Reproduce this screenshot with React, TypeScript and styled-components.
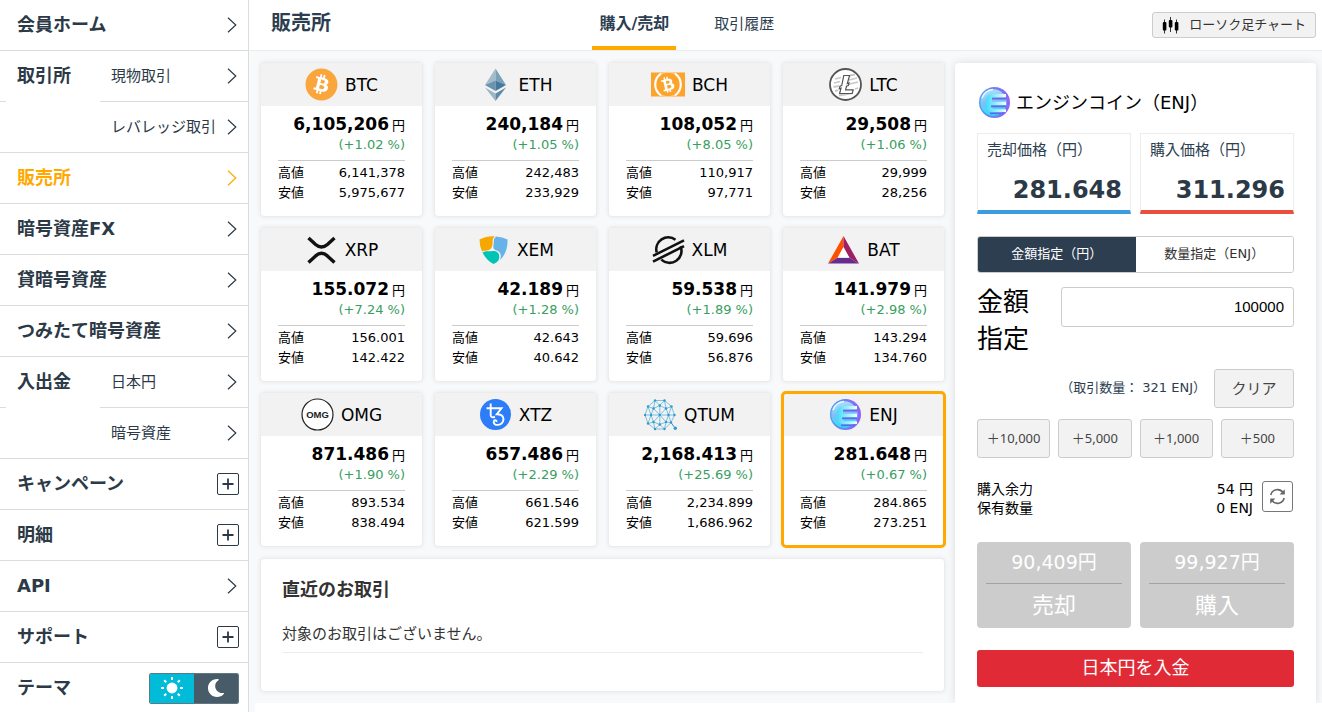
import React, { useState } from 'react';
import styled, { createGlobalStyle } from 'styled-components';
import { FaBitcoin, FaBtc, FaMoon } from 'react-icons/fa';

const GlobalStyle = createGlobalStyle`
  *, *::before, *::after { box-sizing: border-box; }
  body {
    margin: 0;
    background: #fff;
    color: #2c3e50;
    font-family: "DejaVu Sans", "Noto Sans CJK JP", sans-serif;
    font-size: 15px;
  }
  button, input { font-family: inherit; margin: 0; }
  a { color: inherit; text-decoration: none; }
  ul, dl, dd, h1, h2, p { margin: 0; padding: 0; list-style: none; }
`;

/* ---------- page frame ---------- */

const Page = styled.div`
  display: flex;
  min-height: 100vh;
`;

const Sidebar = styled.nav`
  flex: 0 0 249px;
  border-right: 1px solid #dcdcdc;
  color: #2c3a47;
`;

const Main = styled.div`
  flex: 1;
  min-width: 0;
  display: flex;
  flex-direction: column;
  background: #f8f9fb;
`;

const Header = styled.header`
  display: flex;
  align-items: stretch;
  height: 51px;
  background: #fff;
  border-bottom: 1px solid #ececec;
`;

const Workspace = styled.main`
  flex: 1;
  display: flex;
  gap: 10px;
  padding: 11px 6px 0 11px;
  overflow: hidden;
`;

const Footer = styled.footer`
  height: 10px;
  margin-left: 6px;
  background: #fff;
`;

/* ---------- sidebar ---------- */

const NavRow = styled.a<{ $active?: boolean }>`
  display: flex;
  align-items: center;
  justify-content: space-between;
  height: 51px;
  padding: 0 11px 0 17px;
  border-bottom: 1px solid #dcdcdc;
  font-size: 18px;
  font-weight: 700;
  line-height: 24px;
  color: ${(p) => (p.$active ? '#ffa900' : 'inherit')};
`;

const NavToggle = styled.button`
  display: flex;
  align-items: center;
  justify-content: space-between;
  width: 100%;
  height: 51px;
  padding: 0 9px 0 17px;
  border: 0;
  border-bottom: 1px solid #dcdcdc;
  background: none;
  color: inherit;
  font-size: 18px;
  font-weight: 700;
  line-height: 24px;
`;

const NavGroup = styled.div`
  display: grid;
  grid-template-columns: 6px 94px 1fr;
  border-bottom: 1px solid #dcdcdc;
`;

const GroupStub = styled.div`
  height: 51px;
  border-bottom: 1px solid #dcdcdc;
`;

const GroupLabel = styled.div`
  padding: 13px 0 0 11px;
  font-size: 18px;
  font-weight: 700;
  line-height: 24px;
`;

const SubLink = styled.a`
  display: flex;
  align-items: center;
  justify-content: space-between;
  height: 51px;
  padding: 0 11px;
  font-size: 15px;
  white-space: nowrap;
  & + & { height: 50px; }
  &:not(:last-child) { border-bottom: 1px solid #dcdcdc; }
`;

const Raised = styled.span`
  padding-bottom: 4px;
`;

const PlusBox = styled.span`
  display: flex;
  align-items: center;
  justify-content: center;
  width: 22px;
  height: 22px;
  border: 1px solid #2c3a47;
  border-radius: 2px;
`;

const ThemeRow = styled.div`
  display: flex;
  align-items: center;
  justify-content: space-between;
  height: 50px;
  padding: 0 9px 0 17px;
  font-size: 18px;
  font-weight: 700;
  line-height: 24px;
`;

const ThemeSwitch = styled.div`
  display: flex;
  width: 90px;
  height: 31px;
  border: 1px solid #5e7884;
  border-radius: 2px;
  overflow: hidden;
`;

const ThemeButton = styled.button<{ $on?: boolean }>`
  flex: 1;
  display: flex;
  align-items: center;
  justify-content: center;
  padding: 0;
  border: 0;
  background: ${(p) => (p.$on ? '#00bcd9' : '#485b68')};
  color: #fff;
`;

/* ---------- header ---------- */

const Title = styled.h1`
  flex: 0 0 32%;
  padding-left: 22px;
  font-size: 20px;
  font-weight: 700;
  line-height: 47px;
`;

const Tabs = styled.div`
  display: flex;
  gap: 26px;
`;

const Tab = styled.button<{ $active?: boolean }>`
  width: 84px;
  padding: 0 0 2px;
  border: 0;
  border-bottom: 4px solid ${(p) => (p.$active ? '#ffa900' : 'transparent')};
  background: none;
  color: #2c3e50;
  font-size: ${(p) => (p.$active ? '16px' : '15px')};
  font-weight: ${(p) => (p.$active ? 700 : 400)};
  white-space: nowrap;
`;

const ChartButton = styled.button`
  display: flex;
  align-items: center;
  gap: 10px;
  height: 26px;
  margin: 12px 6px 0 auto;
  padding: 0 9px;
  border: 1px solid #ccc;
  border-radius: 3px;
  background: #f2f2f2;
  color: #333;
  font-size: 13px;
  white-space: nowrap;
`;

/* ---------- coin cards ---------- */

const Column = styled.div`
  flex: 1;
  min-width: 0;
`;

const CardGrid = styled.div`
  display: grid;
  grid-template-columns: repeat(4, minmax(0, 1fr));
  gap: 10px 11px;
`;

const Card = styled.article<{ $selected?: boolean }>`
  height: 155px;
  border: 1px solid #ececec;
  border-radius: 4px;
  background: #fff;
  color: #000;
  box-shadow: 0 0 4px rgba(0, 0, 0, 0.08);
  outline: ${(p) => (p.$selected ? '3px solid #ffa900' : 'none')};
  outline-offset: -2px;
`;

const CardHead = styled.header`
  display: flex;
  align-items: center;
  justify-content: center;
  gap: 7px;
  height: 43px;
  background: #f2f2f2;
  font-size: 17px;
  line-height: 24px;
`;

const CardBody = styled.div`
  padding: 6px 17px 0;
  text-align: right;
`;

const Price = styled.div`
  height: 24px;
  font-size: 17px;
  font-weight: 700;
  line-height: 24px;
  white-space: nowrap;
`;

const Unit = styled.span`
  margin-left: 3px;
  font-size: 13px;
  font-weight: 400;
`;

const Change = styled.div`
  padding-bottom: 7px;
  border-bottom: 1px solid #ccc;
  color: #389e60;
  font-size: 13px;
  line-height: 17px;
`;

const Range = styled.dl`
  padding-top: 2px;
  font-size: 13px;
  line-height: 20px;
`;

const RangeRow = styled.div`
  display: flex;
  justify-content: space-between;
`;

const Recent = styled.section`
  height: 134px;
  margin-top: 11px;
  padding: 19px 21px 0;
  border: 1px solid #ececec;
  border-radius: 4px;
  background: #fff;
  box-shadow: 0 0 5px rgba(0, 0, 0, 0.08);
`;

const RecentTitle = styled.h2`
  font-size: 18px;
  font-weight: 700;
  line-height: 24px;
  color: #333;
`;

const RecentText = styled.p`
  margin-top: 19px;
  padding-bottom: 4px;
  border-bottom: 1px solid #ececec;
  line-height: 27px;
  color: #333;
`;

/* ---------- order panel ---------- */

const Panel = styled.form`
  flex: 0 0 361px;
  margin-top: 1px;
  padding: 23px 22px 0;
  border-radius: 4px 4px 0 0;
  background: #fff;
  box-shadow: 0 0 8px rgba(0, 0, 0, 0.12);
`;

const PanelHead = styled.h2`
  display: flex;
  align-items: center;
  gap: 5px;
  height: 33px;
  padding-left: 1px;
  color: #000;
  font-size: 18px;
  font-weight: 400;
`;

const Pair = styled.div`
  display: grid;
  grid-template-columns: 1fr 1fr;
  gap: 9px;
`;

const Quotes = styled(Pair)`
  margin-top: 14px;
`;

const Quote = styled.div<{ $color: string }>`
  height: 81px;
  padding: 5px 8px 0 9px;
  border: 1px solid #ececec;
  border-bottom: 4px solid ${(p) => p.$color};
`;

const QuoteLabel = styled.div`
  line-height: 22px;
`;

const QuoteValue = styled.div`
  margin-top: 11px;
  font-size: 24px;
  font-weight: 700;
  line-height: 36px;
  text-align: right;
  color: #2c3a47;
`;

const Segments = styled.div`
  display: grid;
  grid-template-columns: 1fr 1fr;
  height: 37px;
  margin-top: 22px;
  border: 1px solid #ccc;
  border-radius: 3px;
  overflow: hidden;
`;

const Segment = styled.button<{ $on?: boolean }>`
  padding: 0 0 4px;
  border: 0;
  background: ${(p) => (p.$on ? '#2c3e50' : '#fff')};
  color: ${(p) => (p.$on ? '#fff' : '#333')};
  font-size: 13px;
  font-weight: 400;
`;

const AmountRow = styled.div`
  display: flex;
  justify-content: space-between;
  align-items: flex-start;
  margin-top: 11px;
`;

const AmountLabel = styled.label`
  width: 60px;
  color: #000;
  font-size: 26px;
  line-height: 37px;
  word-break: break-all;
`;

const AmountInput = styled.input`
  width: 233px;
  height: 40px;
  margin-top: 3px;
  padding: 0 9px 2px;
  border: 1px solid #ccc;
  border-radius: 3px;
  background: #fff;
  color: #000;
  font-family: "Liberation Sans", sans-serif;
  font-size: 15px;
  text-align: right;
`;

const GreyButton = styled.button`
  height: 39px;
  padding: 0 0 3px;
  border: 1px solid #ccc;
  border-radius: 3px;
  background: #f2f2f2;
  color: #444;
  font-family: "Noto Sans", "Noto Sans CJK JP", sans-serif;
  font-size: 13px;
`;

const ClearRow = styled.div`
  display: flex;
  align-items: center;
  justify-content: flex-end;
  gap: 8px;
  margin-top: 11px;
  font-size: 13px;
`;

const ClearButton = styled(GreyButton)`
  width: 80px;
  font-size: 15px;
`;

const Steps = styled.div`
  display: grid;
  grid-template-columns: repeat(4, 1fr);
  gap: 8px;
  margin-top: 11px;
`;

const Balance = styled.div`
  display: flex;
  align-items: center;
  gap: 9px;
  margin-top: 22px;
  padding-right: 1px;
  color: #000;
  font-size: 14px;
  line-height: 19px;
`;

const BalanceList = styled.dl`
  flex: 1;
`;

const Refresh = styled.button`
  display: flex;
  align-items: center;
  justify-content: center;
  width: 31px;
  height: 31px;
  margin-bottom: 6px;
  padding: 0;
  border: 1px solid #777;
  border-radius: 3px;
  background: #fff;
`;

const Orders = styled(Pair)`
  margin-top: 24px;
`;

const OrderButton = styled.button`
  display: flex;
  flex-direction: column;
  align-items: stretch;
  height: 86px;
  padding: 0 9px;
  border: 0;
  border-radius: 4px;
  background: #ccc;
  color: #fff;
`;

const OrderAmount = styled.span`
  border-bottom: 1px solid #a3a3a3;
  font-size: 19px;
  line-height: 41px;
`;

const OrderSide = styled.span`
  font-size: 22px;
  line-height: 43px;
`;

const Deposit = styled.button`
  width: 100%;
  height: 37px;
  margin-top: 22px;
  padding: 0 0 5px;
  border: 0;
  border-radius: 3px;
  background: #e02b37;
  color: #fff;
  font-size: 18px;
`;

/* ---------- small icons ---------- */

const Chevron = () => (
  <svg width="10" height="16" viewBox="0 0 10 16" fill="none" stroke="currentColor" strokeWidth="1.2" aria-hidden>
    <path d="M1 0.8 8.8 8 1 15.2" />
  </svg>
);

const Plus = () => (
  <PlusBox>
    <svg width="12" height="12" viewBox="0 0 12 12" stroke="currentColor" strokeWidth="1.8" aria-hidden>
      <path d="M6 0.5V11.5M0.5 6H11.5" />
    </svg>
  </PlusBox>
);

const Sun = () => (
  <svg width="22" height="22" viewBox="0 0 22 22" aria-hidden>
    <circle cx="11" cy="11" r="5.4" fill="#fff" />
    <path
      d="M11 0V3M11 19V22M0 11H3M19 11H22M3.2 3.2 5.2 5.2M16.8 16.8 18.8 18.8M3.2 18.8 5.2 16.8M16.8 5.2 18.8 3.2"
      stroke="#fff"
      strokeWidth="2"
    />
  </svg>
);

const Candles = () => (
  <svg width="17" height="17" viewBox="0 0 17 17" aria-hidden>
    <path d="M2.5 2.5V16.5M8.5 0V15M14.5 2.5V16.5" stroke="#333" strokeWidth="1" />
    <rect x="0.8" y="5" width="3.6" height="8.5" rx="1" />
    <rect x="6.8" y="3" width="3.6" height="7.5" rx="1" />
    <rect x="12.8" y="5" width="3.6" height="8.5" rx="1" />
  </svg>
);

const RefreshIcon = () => (
  <svg width="17" height="17" viewBox="0 0 17 17" fill="none" stroke="#666" strokeWidth="1.6" aria-hidden>
    <path d="M1.8 7A6.8 6.8 0 0 1 14 4.6M15.2 10A6.8 6.8 0 0 1 3 12.4" />
    <path d="M15.8 1.2V6.4H10.6ZM1.2 15.8V10.6H6.4Z" fill="#666" stroke="none" />
  </svg>
);

/* ---------- coin logos ---------- */

const Logo = ({ children }: { children: React.ReactNode }) => (
  <svg width="33" height="33" viewBox="0 0 33 33" aria-hidden>
    {children}
  </svg>
);

const BtcLogo = () => (
  <Logo>
    <circle cx="16.5" cy="16.5" r="14" fill="#fff" />
    <FaBitcoin size={33} color="#fba63c" />
  </Logo>
);

const EthLogo = () => (
  <Logo>
    <path d="M16.5 0.5 6 17 16.5 12.4Z" fill="#a3bccc" />
    <path d="M16.5 0.5 27 17 16.5 12.4Z" fill="#7ba0b8" />
    <path d="M16.5 12.4 6 17 16.5 23Z" fill="#6a93ae" />
    <path d="M16.5 12.4 27 17 16.5 23Z" fill="#47789a" />
    <path d="M6 19.6 16.5 25.5V33Z" fill="#9ab6c7" />
    <path d="M27 19.6 16.5 25.5V33Z" fill="#5f8ba8" />
  </Logo>
);

const BchLogo = () => (
  <svg width="34" height="33" viewBox="0 0 34 33" aria-hidden>
    <rect y="4.5" width="34" height="24" fill="#fca32c" />
    <path
      d="M10 5.6A13.2 13.2 0 0 0 10 27.4M24 5.6A13.2 13.2 0 0 1 24 27.4"
      fill="none"
      stroke="#fff"
      strokeWidth="2.2"
    />
    <path d="M10 5.6Q17 2.6 24 5.6M10 27.4Q17 30.4 24 27.4" fill="none" stroke="#fdd49c" strokeWidth="1" />
    <g transform="rotate(-14 17 16.5) translate(9 8.500)">
      <FaBtc size={16} color="#fff" />
    </g>
  </svg>
);

const LtcLogo = () => (
  <Logo>
    <circle cx="16.5" cy="16.5" r="15.500" fill="#fff" stroke="#555" strokeWidth="1.800" />
    <path
      d="M6 11 12 9.500M21 7.500 26 6.500M5 15 11 13.500M20 12 28 10M4.500 19 10 18M19 16.500 29 14M6 23 9 22.300M26 21 29 20M10 27.500 24 25"
      stroke="#c9c9c9"
      strokeWidth="1.800"
    />
    <path
      d="M14.800 7.500H20.600L18.300 15.600 20 15 19.300 17.600 17.500 18.300 16.600 21.800H24.200L23.200 25.500H10.600L12 20.200 10.300 20.800 11 18.200 12.700 17.500Z"
      fill="#fff"
      stroke="#555"
      strokeWidth="1.200"
    />
  </Logo>
);

const XrpLogo = () => (
  <Logo>
    <path
      d="M3.500 5 10.600 11.500Q16.500 16.600 22.400 11.500L29.500 5M3.500 29.500 10.600 22.900Q16.500 17.800 22.400 22.900L29.500 29.500"
      fill="none"
      stroke="#111"
      strokeWidth="3.400"
    />
  </Logo>
);

const XemLogo = () => (
  <Logo>
    <path d="M2.500 6.500Q9 2.800 18 3.200C13.500 6 17.500 12.500 13.500 16 10 18.500 7 17 5 18.500Q2.500 12.500 2.500 6.500Z" fill="#f7a800" />
    <path d="M19 3.500Q25.500 4 30.500 6.500C31 15 28 22.500 23 27 25 21.500 23 18.500 19.500 17.500 14.500 16 17 12 16.800 9Q16.800 5 19 3.500Z" fill="#67b2e8" />
    <path d="M5.500 19.500C9.500 17 12 19 15.500 18 20 17.500 24 20.500 21.500 27.500Q19.500 29.500 16.500 31 9.500 27.500 5.500 19.500Z" fill="#00c4b3" />
  </Logo>
);

const XlmLogo = () => (
  <Logo>
    <path d="M4.700 19.500A12 12 0 0 1 23.500 6.800M28.600 13.300A12 12 0 0 1 9.300 26.600" fill="none" stroke="#111" strokeWidth="2.600" />
    <path d="M1 22.800 32 7.400M1 28.600 32 13.200" stroke="#111" strokeWidth="2.600" />
  </Logo>
);

const BatLogo = () => (
  <Logo>
    <path d="M16.500 3 1 30.500 11 24.500 16.500 14.500Z" fill="#ff5000" />
    <path d="M16.500 3 32 30.500 22 24.500 16.500 14.500Z" fill="#9e1f63" />
    <path d="M1 30.500H32L22 24.500H11Z" fill="#662d91" />
    <path d="M16.500 14 10.500 24.800H22.500Z" fill="#fff" />
  </Logo>
);

const OmgLogo = () => (
  <Logo>
    <circle cx="16.500" cy="16.500" r="15.500" fill="#fff" stroke="#222" strokeWidth="1.200" />
    <text x="16.500" y="20" textAnchor="middle" fontFamily="Liberation Sans, sans-serif" fontWeight="700" fontSize="9.500" fill="#222">
      OMG
    </text>
  </Logo>
);

const XtzLogo = () => (
  <Logo>
    <circle cx="16.500" cy="16.500" r="15.500" fill="#2c7df7" />
    <path
      d="M7.500 10.300H22.500L17.800 16.200C24 16 25.300 20 24 23.300 22 28 14.500 28 14.700 23.800 15 21.500 18 22 17.400 24M11.700 5.500V17.500Q12 20.200 16 18.800"
      fill="none"
      stroke="#fff"
      strokeWidth="1.900"
    />
  </Logo>
);

const qtumNodes: [number, number][] = [
  [11, 2.5], [20.5, 2.5], [4, 8.5], [15.8, 7.5], [27.5, 8.5],
  [9.5, 10.5], [22, 10.5], [1, 17], [7, 17], [15.8, 17], [24.5, 17], [30.5, 17],
  [9.5, 24], [22, 24], [4, 25.5], [15.8, 26.5], [27, 24.5], [11, 31], [20.5, 31],
];

const QtumLogo = () => (
  <Logo>
    {qtumNodes.flatMap((a, i) =>
      qtumNodes.slice(i + 1).map((b, j) =>
        Math.hypot(a[0] - b[0], a[1] - b[1]) < 10.7 ? (
          <line key={`${i}-${j}`} x1={a[0]} y1={a[1]} x2={b[0]} y2={b[1]} stroke="#5fb2dc" strokeWidth="0.8" />
        ) : null,
      ),
    )}
    {qtumNodes.map(([x, y]) => (
      <circle key={`${x}-${y}`} cx={x} cy={y} r="1.2" fill="#2e9ad0" />
    ))}
    <path d="M27 24.500 31 30" stroke="#2e9ad0" strokeWidth="1" />
    <circle cx="31.300" cy="30.300" r="1.700" fill="#2e9ad0" />
  </Logo>
);

const EnjLogo = ({ id }: { id: string }) => (
  <Logo>
    <defs>
      <linearGradient id={`${id}-ring`} x1="0" y1="0" x2="1" y2="0">
        <stop offset="0" stopColor="#4f9df2" />
        <stop offset="1" stopColor="#9460f7" />
      </linearGradient>
      <linearGradient id={`${id}-core`} x1="0.2" y1="0" x2="0.4" y2="1">
        <stop offset="0" stopColor="#b4e2fb" />
        <stop offset="0.5" stopColor="#7cc0f7" />
        <stop offset="1" stopColor="#27e4fb" />
      </linearGradient>
      <linearGradient id={`${id}-letter`} x1="0" y1="0" x2="1" y2="0">
        <stop offset="0" stopColor="#3fdcfa" />
        <stop offset="1" stopColor="#f4feff" />
      </linearGradient>
    </defs>
    <circle cx="16.5" cy="16.5" r="15.5" fill={`url(#${id}-ring)`} />
    <circle cx="15.5" cy="16.5" r="13.2" fill={`url(#${id}-core)`} />
    <path
      d="M28 8H14Q8.500 8.500 8 14V19.500Q8.500 25.500 14 26H28V23.200H15L14 21.500V19H28V15.800H14V12.800L15 11.200H28Z"
      fill={`url(#${id}-letter)`}
    />
    <path d="M14 12.700H28M13 20.400H28M12 27.300H26" stroke="#6a63ec" strokeWidth="1.800" />
    <path d="M4 12A13 13 0 0 1 15 3.500" fill="none" stroke="#e5fbff" strokeWidth="1.600" />
  </Logo>
);

/* ---------- data ---------- */

const coins: { code: string; logo: React.ReactNode; price: string; change: string; high: string; low: string }[] = [
  { code: 'BTC', logo: <BtcLogo />, price: '6,105,206', change: '+1.02', high: '6,141,378', low: '5,975,677' },
  { code: 'ETH', logo: <EthLogo />, price: '240,184', change: '+1.05', high: '242,483', low: '233,929' },
  { code: 'BCH', logo: <BchLogo />, price: '108,052', change: '+8.05', high: '110,917', low: '97,771' },
  { code: 'LTC', logo: <LtcLogo />, price: '29,508', change: '+1.06', high: '29,999', low: '28,256' },
  { code: 'XRP', logo: <XrpLogo />, price: '155.072', change: '+7.24', high: '156.001', low: '142.422' },
  { code: 'XEM', logo: <XemLogo />, price: '42.189', change: '+1.28', high: '42.643', low: '40.642' },
  { code: 'XLM', logo: <XlmLogo />, price: '59.538', change: '+1.89', high: '59.696', low: '56.876' },
  { code: 'BAT', logo: <BatLogo />, price: '141.979', change: '+2.98', high: '143.294', low: '134.760' },
  { code: 'OMG', logo: <OmgLogo />, price: '871.486', change: '+1.90', high: '893.534', low: '838.494' },
  { code: 'XTZ', logo: <XtzLogo />, price: '657.486', change: '+2.29', high: '661.546', low: '621.599' },
  { code: 'QTUM', logo: <QtumLogo />, price: '2,168.413', change: '+25.69', high: '2,234.899', low: '1,686.962' },
  { code: 'ENJ', logo: <EnjLogo id="card" />, price: '281.648', change: '+0.67', high: '284.865', low: '273.251' },
];

const SubMenu = ({ label, items }: { label: string; items: string[] }) => (
  <NavGroup>
    <GroupStub />
    <GroupLabel>{label}</GroupLabel>
    <div>
      {items.map((item) => (
        <SubLink key={item} href="#">
          <Raised>{item}</Raised>
          <Chevron />
        </SubLink>
      ))}
    </div>
  </NavGroup>
);

const NavLink = ({ label, active }: { label: string; active?: boolean }) => (
  <NavRow href="#" $active={active}>
    {label}
    <Chevron />
  </NavRow>
);

const NavExpand = ({ label }: { label: string }) => (
  <NavToggle type="button" aria-expanded={false}>
    {label}
    <Plus />
  </NavToggle>
);

export default function App() {
  const [selected, setSelected] = useState('ENJ');
  const [amount, setAmount] = useState('100000');
  const add = (n: number) => setAmount(String((Number(amount) || 0) + n));

  return (
    <>
      <GlobalStyle />
      <Page>
        <Sidebar>
          <NavLink label="会員ホーム" />
          <SubMenu label="取引所" items={['現物取引', 'レバレッジ取引']} />
          <NavLink label="販売所" active />
          <NavLink label="暗号資産FX" />
          <NavLink label="貸暗号資産" />
          <NavLink label="つみたて暗号資産" />
          <SubMenu label="入出金" items={['日本円', '暗号資産']} />
          <NavExpand label="キャンペーン" />
          <NavExpand label="明細" />
          <NavLink label="API" />
          <NavExpand label="サポート" />
          <ThemeRow>
            テーマ
            <ThemeSwitch>
              <ThemeButton type="button" $on aria-label="ライト">
                <Sun />
              </ThemeButton>
              <ThemeButton type="button" aria-label="ダーク">
                <FaMoon size={18} />
              </ThemeButton>
            </ThemeSwitch>
          </ThemeRow>
        </Sidebar>

        <Main>
          <Header>
            <Title>販売所</Title>
            <Tabs>
              <Tab type="button" $active>購入/売却</Tab>
              <Tab type="button">取引履歴</Tab>
            </Tabs>
            <ChartButton type="button">
              <Candles />
              <Raised>ローソク足チャート</Raised>
            </ChartButton>
          </Header>

          <Workspace>
            <Column>
              <CardGrid>
                {coins.map((c) => (
                  <Card key={c.code} $selected={c.code === selected} onClick={() => setSelected(c.code)}>
                    <CardHead>
                      {c.logo}
                      {c.code}
                    </CardHead>
                    <CardBody>
                      <Price>
                        {c.price}
                        <Unit>円</Unit>
                      </Price>
                      <Change>({c.change} %)</Change>
                      <Range>
                        <RangeRow>
                          <dt>高値</dt>
                          <dd>{c.high}</dd>
                        </RangeRow>
                        <RangeRow>
                          <dt>安値</dt>
                          <dd>{c.low}</dd>
                        </RangeRow>
                      </Range>
                    </CardBody>
                  </Card>
                ))}
              </CardGrid>
              <Recent>
                <RecentTitle>直近のお取引</RecentTitle>
                <RecentText>対象のお取引はございません。</RecentText>
              </Recent>
            </Column>

            <Panel onSubmit={(e) => e.preventDefault()}>
              <PanelHead>
                <EnjLogo id="panel" />
                <Raised>エンジンコイン（ENJ）</Raised>
              </PanelHead>
              <Quotes>
                <Quote $color="#3d9be0">
                  <QuoteLabel>売却価格（円）</QuoteLabel>
                  <QuoteValue>281.648</QuoteValue>
                </Quote>
                <Quote $color="#ea4e3d">
                  <QuoteLabel>購入価格（円）</QuoteLabel>
                  <QuoteValue>311.296</QuoteValue>
                </Quote>
              </Quotes>
              <Segments>
                <Segment type="button" $on>金額指定（円）</Segment>
                <Segment type="button">数量指定（ENJ）</Segment>
              </Segments>
              <AmountRow>
                <AmountLabel htmlFor="amount">金額指定</AmountLabel>
                <AmountInput id="amount" value={amount} onChange={(e) => setAmount(e.target.value)} />
              </AmountRow>
              <ClearRow>
                <Raised>（取引数量： 321 ENJ）</Raised>
                <ClearButton type="button" onClick={() => setAmount('')}>クリア</ClearButton>
              </ClearRow>
              <Steps>
                <GreyButton type="button" onClick={() => add(10000)}>＋10,000</GreyButton>
                <GreyButton type="button" onClick={() => add(5000)}>＋5,000</GreyButton>
                <GreyButton type="button" onClick={() => add(1000)}>＋1,000</GreyButton>
                <GreyButton type="button" onClick={() => add(500)}>＋500</GreyButton>
              </Steps>
              <Balance>
                <BalanceList>
                  <RangeRow>
                    <dt>購入余力</dt>
                    <dd>54 円</dd>
                  </RangeRow>
                  <RangeRow>
                    <dt>保有数量</dt>
                    <dd>0 ENJ</dd>
                  </RangeRow>
                </BalanceList>
                <Refresh type="button" aria-label="更新">
                  <RefreshIcon />
                </Refresh>
              </Balance>
              <Orders>
                <OrderButton type="button">
                  <OrderAmount>90,409円</OrderAmount>
                  <OrderSide>売却</OrderSide>
                </OrderButton>
                <OrderButton type="button">
                  <OrderAmount>99,927円</OrderAmount>
                  <OrderSide>購入</OrderSide>
                </OrderButton>
              </Orders>
              <Deposit type="button">日本円を入金</Deposit>
            </Panel>
          </Workspace>
          <Footer />
        </Main>
      </Page>
    </>
  );
}
